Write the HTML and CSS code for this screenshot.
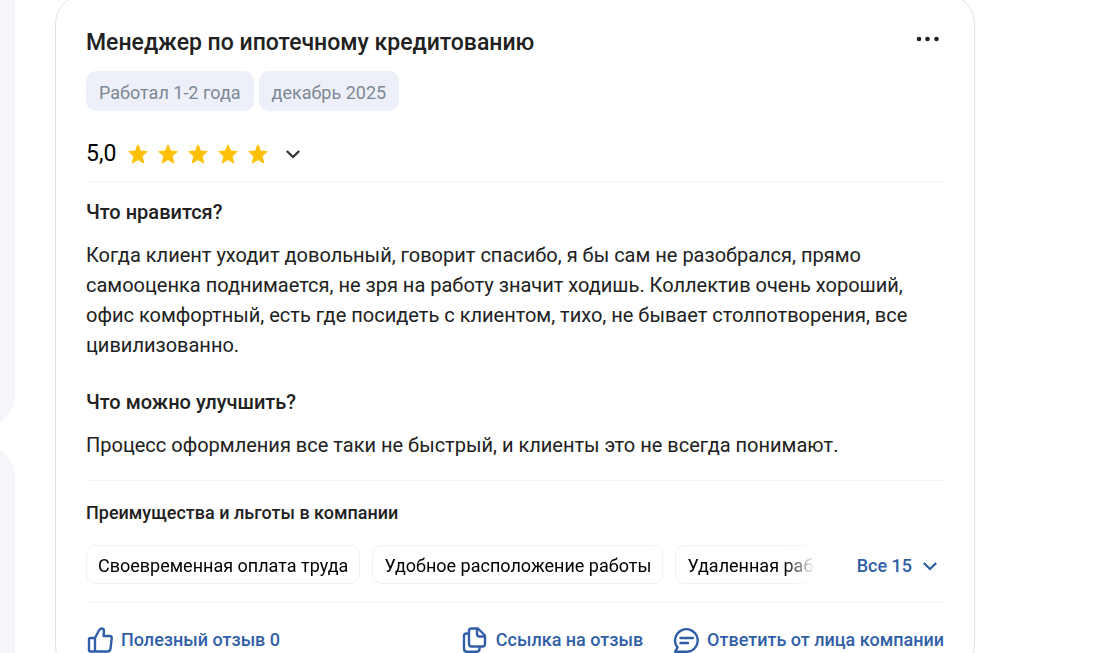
FILE: index.html
```html
<!DOCTYPE html>
<html lang="ru">
<head>
    <meta charset="UTF-8">
    <meta name="viewport" content="width=device-width, initial-scale=1">
    <title>Отзыв: Менеджер по ипотечному кредитованию</title>
    <link rel="stylesheet" href="styles.css">
</head>
<body>

    <svg class="sprite" aria-hidden="true">
        <symbol id="star" viewBox="0 0 20 20">
            <path d="M10 .8l2.600 6.200 6.700.6-5.200 4.500 1.700 7L10 15.500l-5.800 3.600 1.700-7L.7 7.600 7.400 7z" stroke="#ffc107" stroke-width="1" stroke-linejoin="round"/>
        </symbol>
        <symbol id="chevron" viewBox="0 0 14 10">
            <path d="M.8 2L7 8 13.200 2" fill="none" stroke="currentColor" stroke-width="2.300"/>
        </symbol>
    </svg>

    <div class="page">
        <aside class="sidebar">
            <div class="side-block side-block-first"></div>
            <div class="side-block side-block-last"></div>
        </aside>

        <main class="review">
            <header class="review-header">
                <h2>Менеджер по ипотечному кредитованию</h2>
                <button type="button" class="more" aria-label="Ещё">
                    <svg width="24" height="6" viewBox="0 0 24 6" fill="currentColor"><circle cx="3" cy="3" r="2.300"/><circle cx="11.500" cy="3" r="2.300"/><circle cx="20.500" cy="3" r="2.300"/></svg>
                </button>
            </header>

            <div class="tags">
                <span class="tag">Работал 1-2 года</span>
                <span class="tag">декабрь 2025</span>
            </div>

            <div class="rating">
                <span class="score">5,0</span>
                <div class="stars">
                    <svg><use href="#star"/></svg>
                    <svg><use href="#star"/></svg>
                    <svg><use href="#star"/></svg>
                    <svg><use href="#star"/></svg>
                    <svg><use href="#star"/></svg>
                </div>
                <button type="button" class="toggle" aria-label="Показать оценки">
                    <svg class="chevron"><use href="#chevron"/></svg>
                </button>
            </div>

            <section class="answers">
                <h3>Что нравится?</h3>
                <p>Когда клиент уходит довольный, говорит спасибо, я бы сам не разобрался, прямо самооценка поднимается, не зря на работу значит ходишь. Коллектив очень хороший, офис комфортный, есть где посидеть с клиентом, тихо, не бывает столпотворения, все цивилизованно.</p>
                <h3>Что можно улучшить?</h3>
                <p>Процесс оформления все таки не быстрый, и клиенты это не всегда понимают.</p>
            </section>

            <section class="benefits">
                <h4>Преимущества и льготы в компании</h4>
                <div class="benefits-row">
                    <div class="chips">
                        <span class="chip">Своевременная оплата труда</span>
                        <span class="chip">Удобное расположение работы</span>
                        <span class="chip">Удаленная работа</span>
                    </div>
                    <button type="button" class="all">Все 15 <svg class="chevron"><use href="#chevron"/></svg></button>
                </div>
            </section>

            <footer class="actions">
                <button type="button" class="action">
                    <svg viewBox="0 0 26 26"><path d="M8 11H3.500Q2 11 2 12.500V23Q2 24.500 3.500 24.500H8zM8 11l4-7.500Q13 1.500 14.500 1.500 17 1.500 17 4.500L16.500 9H22.500Q25 9 24.700 11.500L23.500 21.500Q23 24.500 20.500 24.500H8"/></svg>
                    Полезный отзыв 0
                </button>
                <button type="button" class="action action-link">
                    <svg viewBox="0 0 26 26"><path d="M9.500 1.500H16L23 8.500V17Q23 19.500 20.500 19.500H9.500Q7 19.500 7 17V4Q7 1.500 9.500 1.500zM15 2V7Q15 9.500 17.500 9.500H22.500M7 6.500H4.500Q2 6.500 2 9V21.500Q2 24.800 5 24.800H14Q17.500 24.800 17.500 22V20"/></svg>
                    Ссылка на отзыв
                </button>
                <button type="button" class="action">
                    <svg viewBox="0 0 26 26"><path d="M4.500 20.500A11.300 11.300 0 1 1 13.500 24.800H2.200zM7.500 11H20M7.500 16H15"/></svg>
                    Ответить от лица компании
                </button>
            </footer>
        </main>
    </div>

</body>
</html>
```

FILE: styles.css
```css
* {
    box-sizing: border-box;
}
body {
    margin: 0;
    height: 100vh;
    overflow: hidden;
    background: #fff;
    color: #212121;
    font-family: Roboto, "Liberation Sans", sans-serif;
    font-size: 20px;
    line-height: 30px;
}
h2, h3, h4, p {
    margin: 0;
    font-weight: 500;
}
button {
    padding: 0;
    border: 0;
    background: none;
    color: inherit;
    font: inherit;
    cursor: pointer;
}
svg {
    display: block;
    flex: none;
}
.sprite {
    display: none;
}
.page {
    display: flex;
    gap: 40px;
    padding-right: 123px;
}
.sidebar {
    display: flex;
    flex-direction: column;
    gap: 20px;
    flex: 0 0 15px;
    height: 100vh;
}
.side-block {
    width: 60px;
    margin-left: -45px;
    background: #f5f6fc;
}
.side-block-first {
    flex: 0 0 426px;
    border-radius: 0 0 30px 30px;
}
.side-block-last {
    flex: 1;
    border-radius: 30px 30px 0 0;
}

/* review card, its rounded top sits slightly above the viewport */
.review {
    flex: 1;
    min-width: 0;
    margin-top: -6px;
    padding: 32px 30px 20px;
    border: 1px solid #dfe3eb;
    border-radius: 30px;
}
.review-header {
    display: flex;
    justify-content: space-between;
    align-items: flex-start;
}
.review-header h2 {
    padding-top: 1px;
    font-size: 23px;
}
.more {
    padding: 9px 4px;
}
.tags {
    display: flex;
    gap: 5px;
    margin-top: 13px;
}
.tag {
    padding: 7px 13px 3px;
    border-radius: 10px;
    background: #edf0f9;
    color: #7c8894;
    font-size: 18px;
}
.rating {
    display: flex;
    align-items: center;
    margin-top: 28px;
    padding-bottom: 12px;
    border-bottom: 1px solid #f1f3f7;
}
.score {
    color: #000;
    font-size: 23px;
}
.stars {
    display: flex;
    gap: 10px;
    margin-left: 12px;
    fill: #ffc107;
}
.stars svg {
    width: 20px;
    height: 20px;
}
.toggle {
    margin-left: 18px;
    color: #333;
}
.chevron {
    width: 14px;
    height: 10px;
}
.answers {
    padding: 15px 0 20px;
    border-bottom: 1px solid #f1f3f7;
}
.answers p {
    margin-top: 13px;
    font-weight: 400;
}
.answers p + h3 {
    margin-top: 27px;
}
.answers h3 {
    font-size: 20px;
}
.benefits {
    padding: 17px 0 18px;
    border-bottom: 1px solid #f1f3f9;
}
.benefits h4 {
    font-size: 18px;
}
.benefits-row {
    display: flex;
    align-items: center;
    justify-content: space-between;
    margin-top: 17px;
    padding-right: 7px;
}
.chips {
    display: flex;
    flex: 1;
    gap: 12px;
    min-width: 0;
    margin-right: 42px;
    overflow: hidden;
    -webkit-mask-image: linear-gradient(to left, transparent, #000 30px);
    mask-image: linear-gradient(to left, transparent, #000 30px);
}
.chip {
    flex: none;
    padding: 5px 11px 2px;
    border: 1px solid #edf0f9;
    border-radius: 10px;
    color: #000;
    font-size: 18px;
}
.all {
    display: flex;
    align-items: center;
    gap: 11px;
    padding-top: 2px;
    color: #315fa7;
    font-size: 18px;
    font-weight: 500;
}
.actions {
    display: flex;
    gap: 30px;
    padding: 22px 0 0 1px;
}
.action {
    display: flex;
    align-items: center;
    gap: 8px;
    color: #315fa7;
    font-size: 18px;
    font-weight: 500;
    white-space: nowrap;
}
.action svg {
    width: 26px;
    height: 26px;
    fill: none;
    stroke: currentColor;
    stroke-width: 2.400;
    stroke-linecap: round;
    stroke-linejoin: round;
}
.action-link {
    margin-left: auto;
}
```
